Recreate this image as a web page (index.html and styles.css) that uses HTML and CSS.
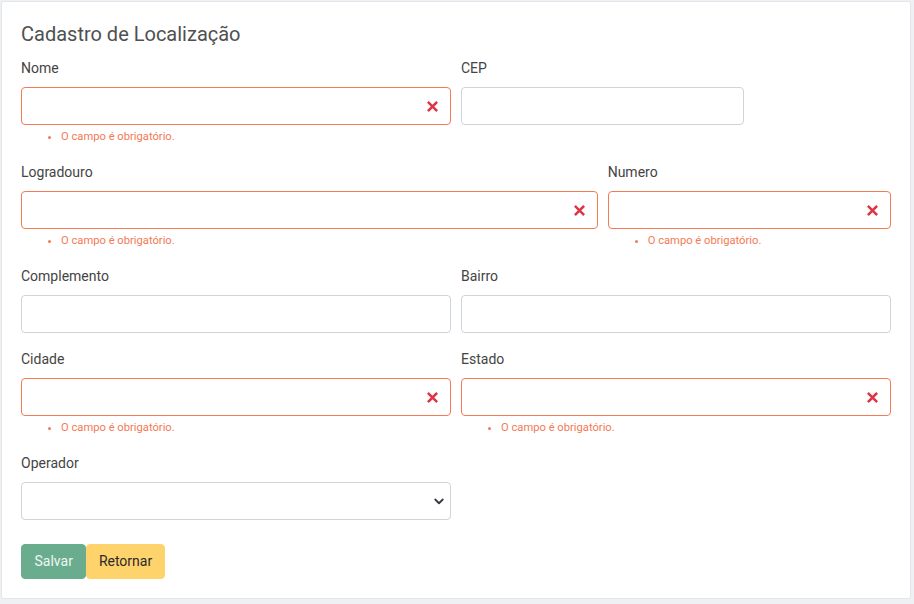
FILE: index.html
```html
<!DOCTYPE html>
<html lang="pt-BR">
<head>
<meta charset="utf-8">
<title>Cadastro de Localização</title>
<link rel="stylesheet" href="styles.css">
</head>
<body>
<div class="card">
  <h1 class="title">Cadastro de Localização</h1>

  <div class="row">
    <div class="field span-3">
      <label class="label">Nome</label>
      <div class="control invalid">
        <input class="input" type="text">
        <svg class="x-icon" viewBox="0 0 12 12"><path d="M2 2L10 10M10 2L2 10" stroke="#dc3545" stroke-width="2.8" stroke-linecap="square"/></svg>
      </div>
      <ul class="errors"><li>O campo é obrigatório.</li></ul>
    </div>
    <div class="field span-2">
      <label class="label">CEP</label>
      <div class="control"><input class="input" type="text"></div>
    </div>
  </div>

  <div class="row">
    <div class="field span-4">
      <label class="label">Logradouro</label>
      <div class="control invalid">
        <input class="input" type="text">
        <svg class="x-icon" viewBox="0 0 12 12"><path d="M2 2L10 10M10 2L2 10" stroke="#dc3545" stroke-width="2.8" stroke-linecap="square"/></svg>
      </div>
      <ul class="errors"><li>O campo é obrigatório.</li></ul>
    </div>
    <div class="field span-2">
      <label class="label">Numero</label>
      <div class="control invalid">
        <input class="input" type="text">
        <svg class="x-icon" viewBox="0 0 12 12"><path d="M2 2L10 10M10 2L2 10" stroke="#dc3545" stroke-width="2.8" stroke-linecap="square"/></svg>
      </div>
      <ul class="errors"><li>O campo é obrigatório.</li></ul>
    </div>
  </div>

  <div class="row">
    <div class="field span-3">
      <label class="label">Complemento</label>
      <div class="control"><input class="input" type="text"></div>
    </div>
    <div class="field span-3">
      <label class="label">Bairro</label>
      <div class="control"><input class="input" type="text"></div>
    </div>
  </div>

  <div class="row">
    <div class="field span-3">
      <label class="label">Cidade</label>
      <div class="control invalid">
        <input class="input" type="text">
        <svg class="x-icon" viewBox="0 0 12 12"><path d="M2 2L10 10M10 2L2 10" stroke="#dc3545" stroke-width="2.8" stroke-linecap="square"/></svg>
      </div>
      <ul class="errors"><li>O campo é obrigatório.</li></ul>
    </div>
    <div class="field span-3">
      <label class="label">Estado</label>
      <div class="control invalid">
        <input class="input" type="text">
        <svg class="x-icon" viewBox="0 0 12 12"><path d="M2 2L10 10M10 2L2 10" stroke="#dc3545" stroke-width="2.8" stroke-linecap="square"/></svg>
      </div>
      <ul class="errors"><li>O campo é obrigatório.</li></ul>
    </div>
  </div>

  <div class="row row-last">
    <div class="field span-3">
      <label class="label">Operador</label>
      <div class="control">
        <select class="input select"><option></option></select>
      </div>
    </div>
  </div>

  <div class="actions">
    <button class="btn btn-save" type="button">Salvar</button>
    <button class="btn btn-back" type="button">Retornar</button>
  </div>
</div>
</body>
</html>
```

FILE: styles.css
```css
* { box-sizing: border-box; }

html, body {
  margin: 0;
  background: #eef0f3;
}

body {
  padding: 1px;
  font-family: Roboto, "Liberation Sans", Arial, sans-serif;
  color: #444;
}

.card {
  width: 910px;
  height: 598px;
  background: #fff;
  border: 1px solid #e2e5e9;
  border-radius: 3px;
  padding: 19px;
}

.title {
  margin: 1px 0 12px;
  font-size: 20px;
  font-weight: 400;
  line-height: 24px;
  color: #505050;
}

.row {
  display: grid;
  grid-template-columns: repeat(6, 1fr);
  column-gap: 10px;
  margin-bottom: 16px;
}

.row-last { margin-bottom: 24px; }

.span-2 { grid-column: span 2; }
.span-3 { grid-column: span 3; }
.span-4 { grid-column: span 4; }

.label {
  display: block;
  font-size: 14px;
  line-height: 21px;
  margin-bottom: 8px;
  color: #444;
}

.control {
  position: relative;
}

.input {
  display: block;
  width: 100%;
  height: 38px;
  border: 1px solid #ced4da;
  border-radius: 4px;
  background: #fff;
  font-family: inherit;
  font-size: 14px;
  padding: 6px 12px;
  outline: none;
}

.invalid .input {
  border-color: #f47a55;
  padding-right: 36px;
}

.x-icon {
  position: absolute;
  right: 13px;
  top: 14px;
  width: 11px;
  height: 11px;
}

.select {
  appearance: none;
  -webkit-appearance: none;
  background-image: url("data:image/svg+xml,%3csvg xmlns='http://www.w3.org/2000/svg' viewBox='0 0 16 16'%3e%3cpath fill='none' stroke='%23343a40' stroke-linecap='round' stroke-linejoin='round' stroke-width='2.4' d='M3 6l5 5 5-5'/%3e%3c/svg%3e");
  background-repeat: no-repeat;
  background-position: right 5px center;
  background-size: 12px 12px;
}

.errors {
  margin: 4px 0 1px;
  padding-left: 40px;
  font-size: 11.2px;
  line-height: 16px;
  color: #f47a55;
}

.actions {
  display: flex;
}

.btn {
  height: 35px;
  border: 1px solid transparent;
  border-radius: 4px;
  font-family: inherit;
  font-size: 14px;
  line-height: 21px;
  padding: 6px 12px;
}

.btn-save {
  background: #69ad8e;
  border-color: #69ad8e;
  color: #eef6f2;
  padding: 6px 12.5px;
}

.btn-back {
  background: #ffd36b;
  border-color: #ffd36b;
  color: #2a2a2a;
  padding: 6px 11.5px 6px 11.5px;
}
```
